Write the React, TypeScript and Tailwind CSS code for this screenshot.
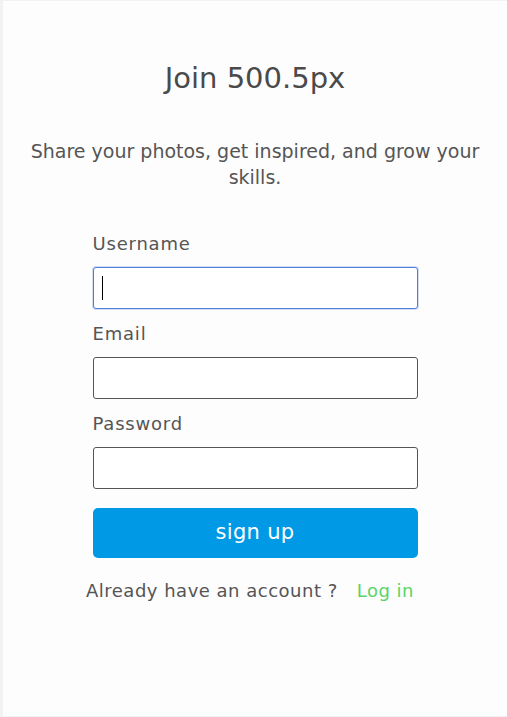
import { useState } from 'react';

const FONT = "font-['DejaVu_Sans','Open_Sans',sans-serif]";

export default function App() {
  const [form, setForm] = useState({ username: '', email: '', password: '' });

  const update = (key: keyof typeof form) => (e: React.ChangeEvent<HTMLInputElement>) =>
    setForm((prev) => ({ ...prev, [key]: e.target.value }));

  return (
    <div className={`min-h-[717px] bg-[#f1f2f4] pl-[3px] py-px ${FONT}`}>
      <div className="min-h-[715px] bg-[#fdfdfd] flex flex-col items-center">
        {/* Heading */}
        <h1 className="mt-[60px] text-[29px] leading-[35px] text-[#4a4a4a]">Join 500.5px</h1>
        <p className="mt-[42px] px-[16px] text-center text-[19px] leading-[26px] text-[#555]">
          Share your photos, get inspired, and grow your skills.
        </p>

        {/* Form */}
        <form className="mt-[42px] w-[325px] flex flex-col" onSubmit={(e) => e.preventDefault()}>
          <label className="text-[18px] leading-[24px] text-[#555] tracking-[0.8px]">Username</label>
          <div className="relative mt-[11px]">
            <input
              value={form.username}
              onChange={update('username')}
              className="block w-full h-[42px] rounded-[3px] border border-[#4f7fd6] bg-white px-2 outline-none shadow-[0_0_0_1px_rgba(79,127,214,0.25)]"
            />
            {form.username === '' && <span className="absolute left-[9px] top-[9px] w-px h-[24px] bg-black" />}
          </div>

          <label className="mt-[13px] text-[18px] leading-[24px] text-[#555] tracking-[0.8px]">Email</label>
          <input
            type="email"
            value={form.email}
            onChange={update('email')}
            className="mt-[11px] block w-full h-[42px] rounded-[3px] border border-[#555] bg-white px-2 outline-none"
          />

          <label className="mt-[13px] text-[18px] leading-[24px] text-[#555] tracking-[0.8px]">Password</label>
          <input
            type="password"
            value={form.password}
            onChange={update('password')}
            className="mt-[11px] block w-full h-[42px] rounded-[3px] border border-[#555] bg-white px-2 outline-none"
          />

          <button
            type="submit"
            className="mt-[19px] h-[50px] w-full rounded-[5px] bg-[#0099e5] text-white text-[21px] tracking-[0.3px] cursor-pointer"
          >
            sign up
          </button>
        </form>

        <p className="mt-[20px] pr-[10px] text-[18px] leading-[26px] text-[#555] tracking-[0.5px]">
          Already have an account ?
          <a href="#" className="ml-[19px] text-[#5ad467]">Log in</a>
        </p>
      </div>
    </div>
  );
}
